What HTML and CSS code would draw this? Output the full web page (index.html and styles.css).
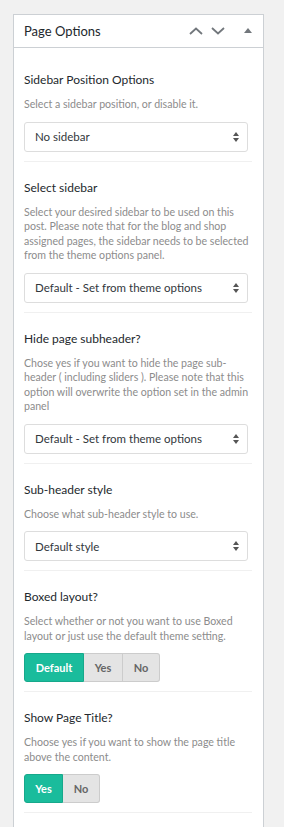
FILE: index.html
```html
<!DOCTYPE html>
<html lang="en">

<head>
    <meta charset="UTF-8">
    <meta name="viewport" content="width=device-width, initial-scale=1.0">
    <title>Page Options</title>
    <link rel="stylesheet" href="styles.css">
</head>

<body>
    <div class="postbox">
        <div class="postbox-header">
            <h2 class="hndle">Page Options</h2>
            <div class="handle-actions">
                <svg class="chev" width="14" height="8" viewBox="0 0 14 8"><path d="M1 7 L7 1.5 L13 7" /></svg>
                <svg class="chev" width="14" height="8" viewBox="0 0 14 8"><path d="M1 1 L7 6.5 L13 1" /></svg>
                <svg class="toggle" width="8" height="5" viewBox="0 0 8 5"><path d="M0 5 L4 0 L8 5 Z" /></svg>
            </div>
        </div>

        <div class="inside">
            <div class="field">
                <h3 class="field-title">Sidebar Position Options</h3>
                <p class="field-desc">Select a sidebar position, or disable it.</p>
                <div class="select">
                    <span>No sidebar</span>
                    <svg width="6" height="10" viewBox="0 0 6 10"><path d="M0 4 L3 0 L6 4 Z M0 6 L3 10 L6 6 Z" /></svg>
                </div>
            </div>

            <div class="field">
                <h3 class="field-title">Select sidebar</h3>
                <p class="field-desc">Select your desired sidebar to be used on this post. Please note that for the blog and shop assigned pages, the sidebar needs to be selected from the theme options panel.</p>
                <div class="select">
                    <span>Default - Set from theme options</span>
                    <svg width="6" height="10" viewBox="0 0 6 10"><path d="M0 4 L3 0 L6 4 Z M0 6 L3 10 L6 6 Z" /></svg>
                </div>
            </div>

            <div class="field">
                <h3 class="field-title">Hide page subheader?</h3>
                <p class="field-desc">Chose yes if you want to hide the page sub-header ( including sliders ). Please note that this option will overwrite the option set in the admin panel</p>
                <div class="select">
                    <span>Default - Set from theme options</span>
                    <svg width="6" height="10" viewBox="0 0 6 10"><path d="M0 4 L3 0 L6 4 Z M0 6 L3 10 L6 6 Z" /></svg>
                </div>
            </div>

            <div class="field">
                <h3 class="field-title">Sub-header style</h3>
                <p class="field-desc">Choose what sub-header style to use.</p>
                <div class="select">
                    <span>Default style</span>
                    <svg width="6" height="10" viewBox="0 0 6 10"><path d="M0 4 L3 0 L6 4 Z M0 6 L3 10 L6 6 Z" /></svg>
                </div>
            </div>

            <div class="field">
                <h3 class="field-title">Boxed layout?</h3>
                <p class="field-desc">Select whether or not you want to use Boxed layout or just use the default theme setting.</p>
                <div class="btn-group">
                    <button class="btn active btn-default">Default</button>
                    <button class="btn btn-yes">Yes</button>
                    <button class="btn btn-no">No</button>
                </div>
            </div>

            <div class="field">
                <h3 class="field-title">Show Page Title?</h3>
                <p class="field-desc">Choose yes if you want to show the page title above the content.</p>
                <div class="btn-group">
                    <button class="btn active btn-yes">Yes</button>
                    <button class="btn btn-no">No</button>
                </div>
            </div>
        </div>
    </div>
</body>

</html>
```

FILE: styles.css
```css
body {
    margin: 0;
    padding: 14px 0 0 13px;
    background: #f1f1f1;
    font-family: "Segoe UI", Lato, sans-serif;
    color: #23282d;
    overflow: hidden;
}

.postbox {
    width: 249px;
    min-height: calc(100vh - 14px);
    background: #fff;
    border: 1px solid #ccd0d4;
    border-bottom: none;
}

.postbox-header {
    display: flex;
    align-items: center;
    justify-content: space-between;
    height: 32px;
    padding: 0 11px 0 10px;
    border-bottom: 1px solid #ccd0d4;
}

.hndle {
    margin: 0;
    font-size: 13px;
    font-weight: 400;
    color: #23282d;
}

.handle-actions {
    display: flex;
    align-items: center;
}

.chev {
    fill: none;
    stroke: #72777c;
    stroke-width: 1.8;
    margin-right: 8px;
}

.toggle {
    fill: #72777c;
    margin-left: 11px;
    margin-top: -2px;
}

/* Fields */
.inside {
    padding: 6px 11px 0 10px;
}

.field {
    padding: 16px 0 9px;
    border-bottom: 1px solid #f0f0f0;
}

.field-title {
    margin: 0 0 7px;
    font-size: 12px;
    line-height: 20px;
    font-weight: 400;
    color: #23282d;
}

.field-desc {
    margin: 0 0 10px;
    font-size: 10.6px;
    line-height: 14.5px;
    color: #8c8c8c;
}

.select {
    display: flex;
    align-items: center;
    justify-content: space-between;
    width: 224px;
    height: 30px;
    box-sizing: border-box;
    padding: 0 8px 0 10px;
    border: 1px solid #ddd;
    border-radius: 3px;
    font-size: 11.5px;
    color: #32373c;
}

.select svg {
    fill: #555;
}

.btn-group {
    display: flex;
}

.btn {
    height: 29px;
    padding: 0;
    border: 1px solid #ccc;
    border-left: none;
    background: #e4e4e4;
    color: #666;
    font-family: inherit;
    font-size: 11px;
    font-weight: 700;
}

.btn:first-child {
    border-left: 1px solid #ccc;
    border-radius: 3px 0 0 3px;
}

.btn:last-child {
    border-radius: 0 3px 3px 0;
}

.btn.active {
    background: #1abc9c;
    border-color: #17a88b;
    color: #fff;
}

.btn-default { width: 60px; }
.btn-yes { width: 39px; }
.btn-no { width: 37px; }
```
